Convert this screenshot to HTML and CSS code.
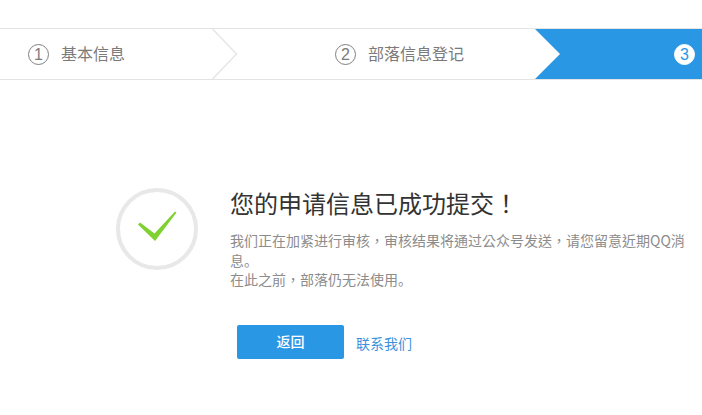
FILE: index.html
```html
<!DOCTYPE html>
<html lang="zh-CN">
<head>
<meta charset="utf-8">
<title>部落信息登记</title>
<link rel="stylesheet" href="styles.css">
</head>
<body>
<div class="steps">
  <div class="step step-one">
    <span class="num">1</span><span class="label">基本信息</span>
    <svg class="arrow" width="26" height="50" viewBox="0 0 26 50"><path d="M0.5 0 L24.5 25 L0.5 50" fill="#fff" stroke="#e6e6e6" stroke-width="1.5"/></svg>
  </div>
  <div class="step step-two">
    <span class="num">2</span><span class="label">部落信息登记</span>
  </div>
  <div class="step step-three">
    <svg class="arrow-in" width="26" height="50" viewBox="0 0 26 50"><path d="M0 0 L25 25 L0 50 Z" fill="#fff"/></svg>
    <span class="num num-active">3</span>
  </div>
</div>
<main class="result">
  <div class="status-icon">
    <svg width="40" height="36" viewBox="0 0 40 36"><path d="M1 13.5 L3 11.5 L17.5 22.5 L38 0.5 L39.5 1.5 L18 30 Z" fill="#7ed12f"/></svg>
  </div>
  <div class="content">
    <h1 class="title" lang="zh-TW">您的申请信息已成功提交！</h1>
    <p class="desc" lang="zh-TW">我们正在加紧进行审核，审核结果将通过公众号发送，请您留意近期QQ消息<span class="stop" lang="zh-CN">。</span><br>在此之前，部落仍无法使用<span class="stop" lang="zh-CN">。</span></p>
    <div class="actions">
      <a class="btn" href="#">返回</a>
      <a class="link" href="#">联系我们</a>
    </div>
  </div>
</main>
</body>
</html>
```
FILE: styles.css
```css
* { box-sizing: border-box; }
html, body { margin: 0; height: 100%; background: #fff; overflow: hidden; }
body {
  padding-top: 28px;
  font-family: "Noto Sans CJK SC", "Liberation Sans", sans-serif;
  color: #333;
}
.steps {
  display: flex;
  height: 52px;
  border-top: 1px solid #e3e3e3;
  border-bottom: 1px solid #e3e3e3;
  overflow: hidden;
}
.step {
  position: relative;
  display: flex;
  align-items: center;
  font-size: 16px;
  color: #7b7b7b;
}
.step-one { width: 212px; padding-left: 28px; }
.step-two { width: 323px; padding-left: 123px; }
.step-three { flex: 1; padding-left: 139px; background: #2a97e5; }
.label { padding-bottom: 2px; }
.num {
  width: 21px;
  height: 21px;
  flex: none;
  margin-right: 12px;
  border: 1px solid #808080;
  border-radius: 50%;
  font-size: 16px;
  line-height: 19px;
  text-align: center;
  font-family: "Liberation Sans", sans-serif;
}
.num-active {
  margin-right: 0;
  border-color: #fff;
  background: #fff;
  color: #2a97e5;
}
.arrow { position: absolute; left: 100%; top: 0; z-index: 1; }
.arrow-in { position: absolute; left: 0; top: 0; }
.result {
  display: flex;
  align-items: flex-start;
  gap: 32px;
  padding: 108px 10px 0 116px;
}
.status-icon {
  display: flex;
  align-items: center;
  justify-content: center;
  flex: none;
  width: 82px;
  height: 82px;
  border: 4px solid #e8e8e8;
  border-radius: 50%;
}
.content { flex: 1; min-width: 0; }
.title {
  margin: 0 0 13px;
  font-family: "Noto Sans CJK TC", sans-serif;
  font-size: 24px;
  font-weight: 400;
  line-height: 30px;
  color: #333;
}
.desc {
  margin: 0;
  font-family: "Noto Sans CJK TC", sans-serif;
  font-size: 14px;
  line-height: 19.5px;
  color: #8c8c8c;
}
.stop { font-family: "Noto Sans CJK SC", sans-serif; }
.actions {
  display: flex;
  align-items: center;
  gap: 12px;
  margin: 35px 0 0 7px;
}
.btn {
  width: 107px;
  height: 34px;
  border-radius: 2px;
  background: #2a97e5;
  color: #fff;
  font-size: 14px;
  font-weight: 500;
  line-height: 32px;
  text-align: center;
  text-decoration: none;
}
.link {
  margin-top: 2px;
  font-size: 14px;
  color: #3a92dc;
  text-decoration: none;
}
```
